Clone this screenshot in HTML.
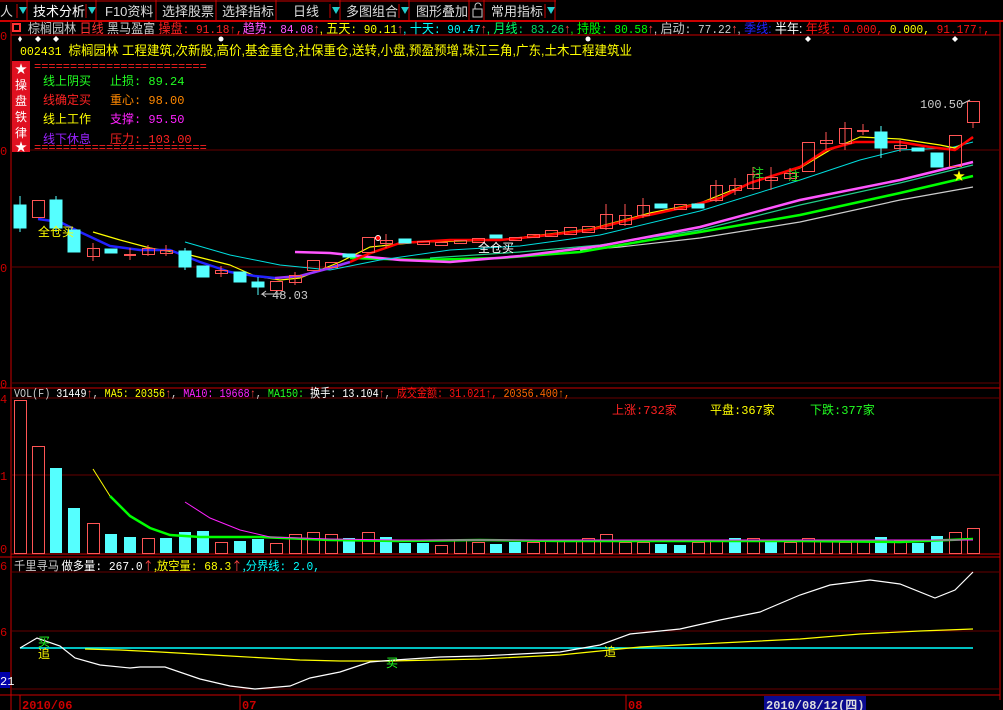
<!DOCTYPE html>
<html><head><meta charset="utf-8"><style>
body{margin:0;background:#000;width:1003px;height:710px;overflow:hidden;font-family:"Liberation Sans","Noto Sans CJK SC",sans-serif;}
svg{position:absolute;left:0;top:0}
text{font-family:"Liberation Mono","Noto Sans CJK SC",monospace;font-size:12px}
.m{font-family:"Liberation Sans","Noto Sans CJK SC",sans-serif;font-size:13px;fill:#ddd}
</style></head><body>
<svg width="1003" height="710" viewBox="0 0 1003 710">
<rect x="0" y="0" width="1003" height="21" fill="#000"/>
<line x1="0" y1="21" x2="1003" y2="21" stroke="#c00" stroke-width="2"/>
<line x1="0" y1="1" x2="556" y2="1" stroke="#c00"/>
<g stroke="#c00"><line x1="27" y1="0" x2="27" y2="21"/><line x1="96" y1="0" x2="96" y2="21"/><line x1="156" y1="0" x2="156" y2="21"/><line x1="216" y1="0" x2="216" y2="21"/><line x1="276" y1="0" x2="276" y2="21"/><line x1="340" y1="0" x2="340" y2="21"/><line x1="409" y1="0" x2="409" y2="21"/><line x1="469" y1="0" x2="469" y2="21"/><line x1="484" y1="0" x2="484" y2="21"/><line x1="555" y1="0" x2="555" y2="21"/></g>
<g fill="#2cc"><path d="M19 7h8l-4 7z"/><path d="M88 7h8l-4 7z"/><path d="M332 7h8l-4 7z"/><path d="M401 7h8l-4 7z"/><path d="M547 7h8l-4 7z"/></g>
<g stroke="#c00"><line x1="17" y1="4" x2="17" y2="18"/><line x1="86" y1="4" x2="86" y2="18"/><line x1="330" y1="4" x2="330" y2="18"/><line x1="399" y1="4" x2="399" y2="18"/><line x1="545" y1="4" x2="545" y2="18"/></g>
<text class="m" x="0" y="16">人</text>
<text class="m" x="33" y="16" style="fill:#fff">技术分析</text>
<text class="m" x="105" y="16">F10资料</text>
<text class="m" x="162" y="16">选择股票</text>
<text class="m" x="222" y="16">选择指标</text>
<text class="m" x="293" y="16">日线</text>
<text class="m" x="346" y="16">多图组合</text>
<text class="m" x="416" y="16">图形叠加</text>
<rect x="473" y="9" width="9" height="8" fill="none" stroke="#ccc"/><path d="M475 9v-3a3 3 0 0 1 6 0" fill="none" stroke="#ccc"/>
<text class="m" x="491" y="16">常用指标</text>

<line x1="11" y1="22" x2="11" y2="710" stroke="#c00"/>
<line x1="1000" y1="22" x2="1000" y2="700" stroke="#c00"/>
<line x1="11" y1="35" x2="1000" y2="35" stroke="#c00"/>
<g stroke="#600"><line x1="11" y1="150" x2="1000" y2="150"/><line x1="11" y1="267" x2="1000" y2="267"/><line x1="11" y1="383" x2="1000" y2="383"/>
<line x1="11" y1="398" x2="1000" y2="398"/><line x1="11" y1="475" x2="1000" y2="475"/>
<line x1="11" y1="572" x2="1000" y2="572"/><line x1="11" y1="631" x2="1000" y2="631"/><line x1="11" y1="689" x2="1000" y2="689"/></g>
<line x1="0" y1="388" x2="1000" y2="388" stroke="#c00"/>
<line x1="11" y1="554" x2="1000" y2="554" stroke="#c00"/>
<line x1="0" y1="557" x2="1000" y2="557" stroke="#c00"/>
<line x1="0" y1="695" x2="1000" y2="695" stroke="#c00"/>
<g fill="#c00" font-size="12"><text x="0" y="40">0</text><text x="0" y="155">0</text><text x="0" y="272">0</text><text x="0" y="388">0</text><text x="0" y="403">4</text><text x="0" y="480">1</text><text x="0" y="553">0</text><text x="0" y="570">6</text><text x="0" y="636">6</text></g>
<rect x="0" y="672" width="10" height="16" fill="#00a"/><text x="0" y="685" fill="#fff">21</text>

<rect x="13" y="24" width="7" height="7" fill="none" stroke="#f33" stroke-width="2"/>
<text x="28" y="33" textLength="962" lengthAdjust="spacingAndGlyphs" style="font-family:'Liberation Sans','Noto Sans CJK SC',sans-serif;font-size:13px" fill="#ccc">棕榈园林 <tspan fill="#f33">日线</tspan> 黑马盈富 <tspan fill="#f22">操盘</tspan><tspan fill="#f22" style="font-family:'Liberation Mono',monospace;font-size:12px">: 91.18↑,</tspan><tspan fill="#f5f">趋势</tspan><tspan fill="#f5f" style="font-family:'Liberation Mono',monospace;font-size:12px">: 84.08</tspan><tspan fill="#f44">↑</tspan><tspan fill="#ff0">, 五天</tspan><tspan fill="#ff0" style="font-family:'Liberation Mono',monospace;font-size:12px">: 90.11</tspan><tspan fill="#f44">↑</tspan><tspan fill="#0ff">, 十天</tspan><tspan fill="#0ff" style="font-family:'Liberation Mono',monospace;font-size:12px">: 90.47</tspan><tspan fill="#f44">↑</tspan><tspan fill="#0f6">, 月线</tspan><tspan fill="#0d6" style="font-family:'Liberation Mono',monospace;font-size:12px">: 83.26</tspan><tspan fill="#f44">↑</tspan><tspan fill="#0f0">, 持股</tspan><tspan fill="#0f0" style="font-family:'Liberation Mono',monospace;font-size:12px">: 80.58</tspan><tspan fill="#f44">↑</tspan><tspan fill="#ccc">, 启动</tspan><tspan fill="#ccc" style="font-family:'Liberation Mono',monospace;font-size:12px">: 77.22</tspan><tspan fill="#f44">↑</tspan><tspan fill="#ccc">, </tspan><tspan fill="#22f">季线</tspan><tspan fill="#22f">: </tspan><tspan fill="#fff">半年: </tspan><tspan fill="#f11">年线</tspan><tspan fill="#f11" style="font-family:'Liberation Mono',monospace;font-size:12px">: 0.000,</tspan><tspan fill="#ff0" style="font-family:'Liberation Mono',monospace;font-size:12px"> 0.000,</tspan><tspan fill="#f11" style="font-family:'Liberation Mono',monospace;font-size:12px"> 91.177↑,</tspan></text>
<g fill="#fff"><path d="M20 36l2 3-2 3-2-3z"/><path d="M38 36l3 3-3 3-3-3z"/><path d="M56 36l3 3-3 3-3-3z"/><circle cx="221" cy="39" r="2.5"/><circle cx="588" cy="39" r="2.5"/><path d="M808 36l3 3-3 3-3-3z"/><path d="M955 36l3 3-3 3-3-3z"/></g>
<text x="20" y="55" fill="#ff0" textLength="612" lengthAdjust="spacingAndGlyphs">002431 <tspan style="font-family:'Liberation Sans','Noto Sans CJK SC',sans-serif;font-size:13px">棕榈园林 工程建筑,次新股,高价,基金重仓,社保重仓,送转,小盘,预盈预增,珠江三角,广东,土木工程建筑业</tspan></text>
<rect x="12" y="61" width="18" height="91" fill="#e01020"/>
<g fill="#fff" style="font-family:'Noto Sans CJK SC',sans-serif" font-size="12"><text x="15" y="73">★</text><text x="15" y="89">操</text><text x="15" y="105">盘</text><text x="15" y="121">铁</text><text x="15" y="137">律</text><text x="15" y="151">★</text></g>
<text x="34" y="70" fill="#f22" font-size="10">========================</text>
<text x="34" y="151" fill="#f22" font-size="10">========================</text>
<g style="font-family:'Liberation Sans','Noto Sans CJK SC',sans-serif" font-size="12">
<text x="43" y="85" fill="#2f2">线上阴买</text><text x="110" y="85" fill="#2f2">止损: 89.24</text>
<text x="43" y="104" fill="#f22">线确定买</text><text x="110" y="104" fill="#f80">重心: 98.00</text>
<text x="43" y="123" fill="#ff0">线上工作</text><text x="110" y="123" fill="#f2f">支撑: 95.50</text>
<text x="43" y="143" fill="#92f">线下休息</text><text x="110" y="143" fill="#f22">压力: 103.00</text></g>

<g fill="none" stroke-linejoin="round">
<polyline stroke="#ccc" stroke-width="1.2" points="580,250 620,247 700,238 800,222 900,200 973,187"/>
<polyline stroke="#0f0" stroke-width="2.5" points="350,258 420,260 500,258 580,252 650,240 700,232 800,215 900,193 973,176"/>
<polyline stroke="#2c8" stroke-width="1.2" points="430,258 520,252 600,245 700,230 800,205 900,183 973,165"/>
<polyline stroke="#f5f" stroke-width="2.5" points="295,252 330,253 400,260 450,262 520,256 600,246 700,227 800,200 900,180 973,162"/>
<polyline stroke="#0dd" stroke-width="1" points="185,242 230,255 280,265 330,270 380,260 450,250 520,246 600,235 700,211 800,180 860,160 900,150 950,148 973,142"/>
<polyline stroke="#ff0" stroke-width="1.2" points="93,232 120,240 150,248 190,255 230,265 255,276 280,280 300,278 340,262 370,247 420,242 500,240 590,229 650,213 700,203 750,183 800,168 830,150 860,137 900,139 940,145 955,148 973,138"/>
<polyline stroke="#22f" stroke-width="2.5" points="38,219 60,222 80,232 110,246 140,250 170,250 200,262 230,272 255,276 275,278"/>
<polyline stroke="#93f" stroke-width="2.5" points="275,278 300,276 330,268 350,262"/>
<polyline stroke="#f00" stroke-width="2.5" points="350,262 368,254 400,243 450,240 500,240 540,236 590,230 640,217 690,206 720,198 750,183 800,167 826,150 855,142 900,142 930,147 955,150 973,137"/>
</g>
<g stroke-width="1">
<g stroke="#5ff" fill="#5ff">
<line x1="20" y1="196" x2="20" y2="232"/><rect x="14" y="205" width="12" height="23"/>
<line x1="56" y1="196" x2="56" y2="232"/><rect x="50" y="200" width="12" height="28"/>
<rect x="68" y="230" width="12" height="22"/><rect x="105" y="249" width="12" height="4"/>
<line x1="185" y1="248" x2="185" y2="270"/><rect x="179" y="251" width="12" height="16"/>
<rect x="197" y="266" width="12" height="11"/><rect x="234" y="272" width="12" height="10"/>
<line x1="258" y1="277" x2="258" y2="295"/><rect x="252" y="282" width="12" height="5"/>
<rect x="343" y="254" width="12" height="3"/><rect x="399" y="239" width="12" height="4"/><rect x="490" y="235" width="12" height="3"/>
<rect x="655" y="204" width="12" height="4"/><rect x="692" y="204" width="12" height="4"/>
<line x1="881" y1="126" x2="881" y2="158"/><rect x="875" y="132" width="12" height="16"/>
<rect x="912" y="148" width="12" height="3"/><rect x="931" y="153" width="12" height="14"/>
</g>
<g stroke="#f55" fill="none">
<rect x="32.5" y="200.5" width="12" height="17"/>
<line x1="93" y1="243" x2="93" y2="261"/><rect x="87.5" y="248.5" width="12" height="8"/>
<line x1="130" y1="248" x2="130" y2="260"/><line x1="124" y1="255" x2="136" y2="255" stroke-width="2"/>
<line x1="148" y1="245" x2="148" y2="256"/><rect x="142.5" y="248.5" width="12" height="6"/>
<line x1="166" y1="245" x2="166" y2="256"/><rect x="160.5" y="250.5" width="12" height="3"/>
<line x1="221" y1="266" x2="221" y2="277"/><rect x="215.5" y="270.5" width="12" height="3"/>
<rect x="270.5" y="281.5" width="12" height="9"/>
<line x1="295" y1="272" x2="295" y2="285"/><rect x="289.5" y="275.5" width="12" height="7"/>
<rect x="307.5" y="260.5" width="12" height="10"/>
<rect x="325.5" y="262.5" width="12" height="5"/>
<rect x="362.5" y="237.5" width="12" height="15"/>
<line x1="386" y1="234" x2="386" y2="248"/><rect x="380.5" y="240.5" width="12" height="3"/>
<rect x="417.5" y="241.5" width="12" height="3"/><rect x="435.5" y="242.5" width="12" height="3"/>
<rect x="454.5" y="240.5" width="12" height="3"/><rect x="472.5" y="238.5" width="12" height="4"/>
<rect x="509.5" y="237.5" width="12" height="3"/><rect x="527.5" y="234.5" width="12" height="3"/>
<rect x="545.5" y="230.5" width="12" height="6"/><rect x="564.5" y="227.5" width="12" height="7"/>
<rect x="582.5" y="226.5" width="12" height="6"/>
<line x1="606" y1="204" x2="606" y2="230"/><rect x="600.5" y="214.5" width="12" height="14"/>
<line x1="625" y1="204" x2="625" y2="226"/><rect x="619.5" y="215.5" width="12" height="9"/>
<line x1="643" y1="198" x2="643" y2="218"/><rect x="637.5" y="205.5" width="12" height="10"/>
<rect x="674.5" y="204.5" width="12" height="5"/>
<line x1="716" y1="180" x2="716" y2="202"/><rect x="710.5" y="185.5" width="12" height="15"/>
<line x1="735" y1="178" x2="735" y2="195"/><rect x="729.5" y="185.5" width="12" height="5"/>
<line x1="753" y1="167" x2="753" y2="190"/><rect x="747.5" y="174.5" width="12" height="14"/>
<line x1="771" y1="167" x2="771" y2="190"/><rect x="765.5" y="177.5" width="12" height="3"/>
<line x1="790" y1="168" x2="790" y2="180"/><rect x="784.5" y="173.5" width="12" height="5"/>
<rect x="802.5" y="142.5" width="12" height="29"/>
<line x1="826" y1="132" x2="826" y2="150"/><rect x="820.5" y="140.5" width="12" height="3"/>
<line x1="845" y1="122" x2="845" y2="150"/><rect x="839.5" y="128.5" width="12" height="15"/>
<line x1="863" y1="124" x2="863" y2="135"/><line x1="857" y1="131" x2="869" y2="131" stroke-width="2"/>
<line x1="900" y1="140" x2="900" y2="152"/><rect x="894.5" y="145.5" width="12" height="3"/>
<rect x="949.5" y="135.5" width="12" height="31"/>
<line x1="973" y1="122" x2="973" y2="128"/><rect x="967.5" y="101.5" width="12" height="21"/>
</g></g>
<text x="920" y="108" fill="#ccc">100.50</text><path d="M962 104l8-4" stroke="#ccc"/>
<path d="M282 294h-20l4-3m-4 3l4 3" stroke="#ccc" fill="none"/><text x="272" y="299" fill="#ccc">48.03</text>
<g style="font-family:'Noto Sans CJK SC',sans-serif" font-size="12"><text x="38" y="236" fill="#ff0">全仓买</text><text x="478" y="252" fill="#fff">全仓买</text>
<text x="752" y="177" fill="#2d2">注</text><text x="788" y="180" fill="#2d2">注</text></g>
<circle cx="378" cy="238" r="2.5" fill="#f00" stroke="#fff"/>
<text x="953" y="180" fill="#ff0" font-size="14">★</text>

<text x="14" y="397" fill="#ccc" textLength="556" lengthAdjust="spacingAndGlyphs">VOL(F) <tspan fill="#fff">31449</tspan><tspan fill="#f44">↑</tspan><tspan fill="#ccc">, </tspan><tspan fill="#ff0">MA5: 20356</tspan><tspan fill="#f44">↑</tspan>, <tspan fill="#f2f">MA10: 19668</tspan><tspan fill="#f44">↑</tspan>, <tspan fill="#2f2">MA150:</tspan> <tspan fill="#fff">换手: 13.104</tspan><tspan fill="#f44">↑</tspan>, <tspan fill="#f11">成交金额: 31.021↑,</tspan><tspan fill="#f60"> 20356.400↑,</tspan></text>
<g style="font-family:'Noto Sans CJK SC',sans-serif" font-size="12"><text x="612" y="414" fill="#f22">上涨:732家</text><text x="710" y="414" fill="#ff0">平盘:367家</text><text x="810" y="414" fill="#2f2">下跌:377家</text></g>
<g fill="#5ff"><rect x="50" y="468" width="12" height="85"/><rect x="68" y="508" width="12" height="45"/><rect x="105" y="534" width="12" height="19"/><rect x="124" y="537" width="12" height="16"/><rect x="160" y="538" width="12" height="15"/><rect x="179" y="532" width="12" height="21"/><rect x="197" y="531" width="12" height="22"/><rect x="234" y="541" width="12" height="12"/><rect x="252" y="539" width="12" height="14"/><rect x="343" y="538" width="12" height="15"/><rect x="380" y="537" width="12" height="16"/><rect x="399" y="543" width="12" height="10"/><rect x="417" y="543" width="12" height="10"/><rect x="490" y="544" width="12" height="9"/><rect x="509" y="542" width="12" height="11"/><rect x="655" y="544" width="12" height="9"/><rect x="674" y="545" width="12" height="8"/><rect x="729" y="538" width="12" height="15"/><rect x="765" y="542" width="12" height="11"/><rect x="875" y="537" width="12" height="16"/><rect x="912" y="543" width="12" height="10"/><rect x="931" y="536" width="12" height="17"/></g>
<g fill="none" stroke="#f55"><rect x="14.5" y="400.5" width="12" height="153"/><rect x="32.5" y="446.5" width="12" height="107"/><rect x="87.5" y="523.5" width="12" height="30"/><rect x="142.5" y="538.5" width="12" height="15"/><rect x="215.5" y="542.5" width="12" height="11"/><rect x="270.5" y="543.5" width="12" height="10"/><rect x="289.5" y="534.5" width="12" height="19"/><rect x="307.5" y="532.5" width="12" height="21"/><rect x="325.5" y="534.5" width="12" height="19"/><rect x="362.5" y="532.5" width="12" height="21"/><rect x="435.5" y="545.5" width="12" height="8"/><rect x="454.5" y="540.5" width="12" height="13"/><rect x="472.5" y="542.5" width="12" height="11"/><rect x="527.5" y="542.5" width="12" height="11"/><rect x="545.5" y="540.5" width="12" height="13"/><rect x="564.5" y="540.5" width="12" height="13"/><rect x="582.5" y="538.5" width="12" height="15"/><rect x="600.5" y="534.5" width="12" height="19"/><rect x="619.5" y="542.5" width="12" height="11"/><rect x="637.5" y="542.5" width="12" height="11"/><rect x="692.5" y="542.5" width="12" height="11"/><rect x="710.5" y="540.5" width="12" height="13"/><rect x="747.5" y="538.5" width="12" height="15"/><rect x="784.5" y="542.5" width="12" height="11"/><rect x="802.5" y="538.5" width="12" height="15"/><rect x="820.5" y="540.5" width="12" height="13"/><rect x="839.5" y="542.5" width="12" height="11"/><rect x="857.5" y="540.5" width="12" height="13"/><rect x="894.5" y="540.5" width="12" height="13"/><rect x="949.5" y="532.5" width="12" height="21"/><rect x="967.5" y="528.5" width="12" height="25"/></g>
<polyline fill="none" stroke="#ff0" points="93,469 110,496"/>
<polyline fill="none" stroke="#0f0" stroke-width="2.5" points="110,496 130,516 150,528 170,535 200,537 260,537 330,540 400,541 480,540 560,541 650,541 720,541 800,541 900,542 973,539"/>
<polyline fill="none" stroke="#f2f" points="185,502 210,518 240,530 270,537 330,539 400,540 973,540"/>
<text x="14" y="570" textLength="306" lengthAdjust="spacingAndGlyphs" style="font-family:'Noto Sans CJK SC',sans-serif" font-size="12" fill="#ccc">千里寻马 <tspan fill="#fff">做多量</tspan><tspan fill="#fff" style="font-family:'Liberation Mono',monospace">: 267.0</tspan><tspan fill="#f44">↑</tspan><tspan fill="#ff0">,放空量</tspan><tspan fill="#ff0" style="font-family:'Liberation Mono',monospace">: 68.3</tspan><tspan fill="#f44">↑</tspan><tspan fill="#0ff">,分界线</tspan><tspan fill="#0ff" style="font-family:'Liberation Mono',monospace">: 2.0,</tspan></text>
<line x1="20" y1="648" x2="973" y2="648" stroke="#0ff" stroke-width="1.5"/>
<polyline fill="none" stroke="#ff0" stroke-width="1.2" points="85,649 120,650 160,652 195,654 230,656 265,658 300,660 340,661 390,661 480,659 560,655 640,647 720,643 800,639 860,634 920,631 973,629"/>
<polyline fill="none" stroke="#fff" stroke-width="1.2" points="20,648 37,638 60,646 75,658 100,665 130,668 140,667 165,667 200,679 230,686 255,689 290,686 310,678 340,672 370,662 395,660 440,657 480,656 520,654 560,652 600,645 630,634 680,629 720,620 760,612 800,595 830,585 870,580 900,584 935,598 955,590 973,572"/>
<g style="font-family:'Noto Sans CJK SC',sans-serif" font-size="12"><text x="38" y="646" fill="#2f2">买</text><text x="38" y="658" fill="#ff0">追</text><text x="386" y="667" fill="#2f2">买</text><text x="604" y="656" fill="#ff0">追</text></g>
<g stroke="#c00"><line x1="20" y1="695" x2="20" y2="710"/><line x1="240" y1="695" x2="240" y2="710"/><line x1="626" y1="695" x2="626" y2="710"/></g>
<g font-family="Liberation Sans" font-size="14" fill="#c00" font-weight="bold"><text x="22" y="709">2010/06</text><text x="242" y="709">07</text><text x="628" y="709">08</text></g>
<rect x="764" y="696" width="102" height="14" fill="#0a0a90"/>
<text x="766" y="709" font-family="Liberation Sans" font-size="14" fill="#ddd" font-weight="bold">2010/08/12(四)</text>
</svg>
</body></html>
